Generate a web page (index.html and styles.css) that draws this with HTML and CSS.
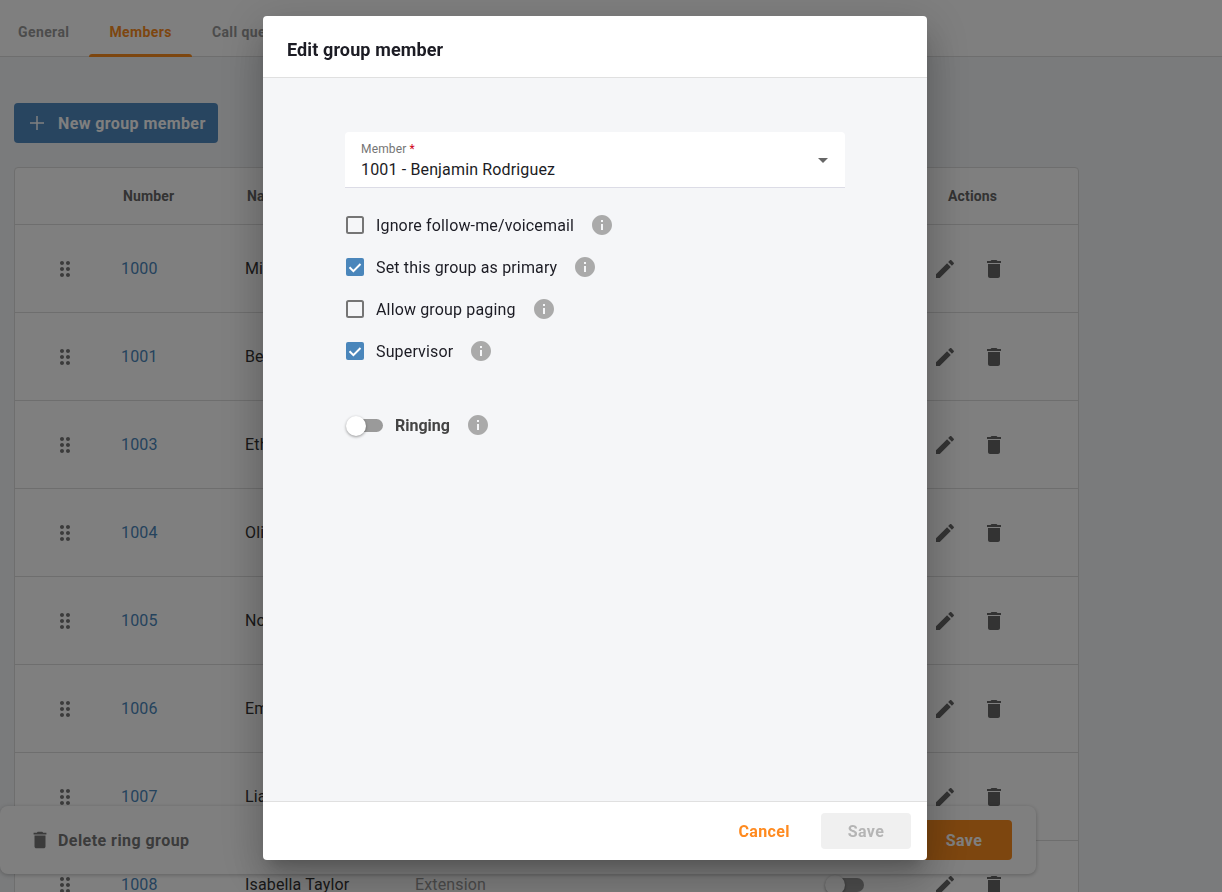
FILE: index.html
```html
<!DOCTYPE html>
<html lang="en">
<head>
  <meta charset="UTF-8">
  <meta name="viewport" content="width=device-width, initial-scale=1.0">
  <title>Edit group member</title>
  <link rel="stylesheet" href="styles.css">
</head>
<body>

  <svg class="defs" width="0" height="0" aria-hidden="true">
    <symbol id="i-drag" viewBox="0 0 24 24"><path d="M11 18c0 1.1-.9 2-2 2s-2-.9-2-2 .9-2 2-2 2 .9 2 2zm-2-8c-1.1 0-2 .9-2 2s.9 2 2 2 2-.9 2-2-.9-2-2-2zm0-6c-1.1 0-2 .9-2 2s.9 2 2 2 2-.9 2-2-.9-2-2-2zm6 4c1.1 0 2-.9 2-2s-.9-2-2-2-2 .9-2 2 .9 2 2 2zm0 2c-1.1 0-2 .9-2 2s.9 2 2 2 2-.9 2-2-.9-2-2-2zm0 6c-1.1 0-2 .9-2 2s.9 2 2 2 2-.9 2-2-.9-2-2-2z"/></symbol>
    <symbol id="i-edit" viewBox="0 0 24 24"><path d="M3 17.25V21h3.75L17.81 9.94l-3.75-3.75L3 17.25zM20.71 7.04c.39-.39.39-1.02 0-1.41l-2.34-2.34c-.39-.39-1.02-.39-1.41 0l-1.83 1.83 3.75 3.75 1.83-1.83z"/></symbol>
    <symbol id="i-trash" viewBox="0 0 24 24"><path d="M6 19c0 1.1.9 2 2 2h8c1.1 0 2-.9 2-2V7H6v12zM19 4h-3.5l-1-1h-5l-1 1H5v2h14V4z"/></symbol>
    <symbol id="i-info" viewBox="0 0 24 24"><path d="M12 2C6.48 2 2 6.48 2 12s4.48 10 10 10 10-4.48 10-10S17.52 2 12 2zm1 15h-2v-6h2v6zm0-8h-2V7h2v2z"/></symbol>
    <symbol id="i-off" viewBox="0 0 24 24"><rect x="4" y="4" width="16" height="16" rx="1.5" fill="none" stroke="#757575" stroke-width="2"/></symbol>
    <symbol id="i-on" viewBox="0 0 24 24"><rect x="3" y="3" width="18" height="18" rx="2" fill="#4a86bb"/><path d="M6.5 12.2l3.9 3.9L17.5 9" fill="none" stroke="#fff" stroke-width="2"/></symbol>
  </svg>

  <div class="page">
    <nav class="tabs">
      <a class="tab first">General</a>
      <a class="tab active">Members</a>
      <a class="tab">Call queue</a>
    </nav>

    <div class="content">
      <button class="btn-new">
        <svg class="icon" viewBox="0 0 24 24"><path d="M19 12.75h-6.25V19h-1.5v-6.25H5v-1.5h6.25V5h1.5v6.25H19v1.5z"/></svg>
        New group member
      </button>

      <div class="table">
        <div class="row head">
          <span></span>
          <span class="h-number">Number</span>
          <span class="h-name">Name</span>
          <span>Type</span>
          <span>Ringing</span>
          <span class="h-actions">Actions</span>
        </div>
        <div class="row">
          <svg class="icon drag"><use href="#i-drag"/></svg>
          <a class="num">1000</a><span>Mia Johnson</span><span class="type">Extension</span>
          <span class="switch"></span>
          <span class="actions"><svg class="icon"><use href="#i-edit"/></svg><svg class="icon"><use href="#i-trash"/></svg></span>
        </div>
        <div class="row">
          <svg class="icon drag"><use href="#i-drag"/></svg>
          <a class="num">1001</a><span>Benjamin Rodriguez</span><span class="type">Extension</span>
          <span class="switch"></span>
          <span class="actions"><svg class="icon"><use href="#i-edit"/></svg><svg class="icon"><use href="#i-trash"/></svg></span>
        </div>
        <div class="row">
          <svg class="icon drag"><use href="#i-drag"/></svg>
          <a class="num">1003</a><span>Ethan Clark</span><span class="type">Extension</span>
          <span class="switch"></span>
          <span class="actions"><svg class="icon"><use href="#i-edit"/></svg><svg class="icon"><use href="#i-trash"/></svg></span>
        </div>
        <div class="row">
          <svg class="icon drag"><use href="#i-drag"/></svg>
          <a class="num">1004</a><span>Olivia Smith</span><span class="type">Extension</span>
          <span class="switch"></span>
          <span class="actions"><svg class="icon"><use href="#i-edit"/></svg><svg class="icon"><use href="#i-trash"/></svg></span>
        </div>
        <div class="row">
          <svg class="icon drag"><use href="#i-drag"/></svg>
          <a class="num">1005</a><span>Noah Williams</span><span class="type">Extension</span>
          <span class="switch"></span>
          <span class="actions"><svg class="icon"><use href="#i-edit"/></svg><svg class="icon"><use href="#i-trash"/></svg></span>
        </div>
        <div class="row">
          <svg class="icon drag"><use href="#i-drag"/></svg>
          <a class="num">1006</a><span>Emma Brown</span><span class="type">Extension</span>
          <span class="switch"></span>
          <span class="actions"><svg class="icon"><use href="#i-edit"/></svg><svg class="icon"><use href="#i-trash"/></svg></span>
        </div>
        <div class="row">
          <svg class="icon drag"><use href="#i-drag"/></svg>
          <a class="num">1007</a><span>Liam Davis</span><span class="type">Extension</span>
          <span class="switch"></span>
          <span class="actions"><svg class="icon"><use href="#i-edit"/></svg><svg class="icon"><use href="#i-trash"/></svg></span>
        </div>
        <div class="row">
          <svg class="icon drag"><use href="#i-drag"/></svg>
          <a class="num">1008</a><span>Isabella Taylor</span><span class="type">Extension</span>
          <span class="switch"></span>
          <span class="actions"><svg class="icon"><use href="#i-edit"/></svg><svg class="icon"><use href="#i-trash"/></svg></span>
        </div>
      </div>
    </div>

    <div class="action-bar">
      <button class="btn-delete"><svg class="icon"><use href="#i-trash"/></svg>Delete ring group</button>
      <button class="btn-save">Save</button>
    </div>
  </div>

  <div class="overlay">
    <div class="modal">
      <header class="modal-head">Edit group member</header>

      <div class="modal-body">
        <div class="form">
          <div class="select">
            <label class="select-label">Member <em>*</em></label>
            <div class="select-value">1001 - Benjamin Rodriguez</div>
            <span class="caret"></span>
          </div>

          <div class="checks">
            <div class="check">
              <svg class="icon"><use href="#i-off"/></svg>
              <span>Ignore follow-me/voicemail</span>
              <svg class="icon info"><use href="#i-info"/></svg>
            </div>
            <div class="check">
              <svg class="icon"><use href="#i-on"/></svg>
              <span>Set this group as primary</span>
              <svg class="icon info"><use href="#i-info"/></svg>
            </div>
            <div class="check">
              <svg class="icon"><use href="#i-off"/></svg>
              <span>Allow group paging</span>
              <svg class="icon info"><use href="#i-info"/></svg>
            </div>
            <div class="check">
              <svg class="icon"><use href="#i-on"/></svg>
              <span>Supervisor</span>
              <svg class="icon info"><use href="#i-info"/></svg>
            </div>
          </div>

          <div class="ringing">
            <span class="switch"></span>
            <span class="ringing-label">Ringing</span>
            <svg class="icon info"><use href="#i-info"/></svg>
          </div>
        </div>
      </div>

      <footer class="modal-foot">
        <button class="btn-cancel">Cancel</button>
        <button class="btn-disabled">Save</button>
      </footer>
    </div>
  </div>

</body>
</html>
```

FILE: styles.css
```css
* {
  box-sizing: border-box;
}

html, body {
  height: 100%;
  margin: 0;
  overflow: hidden;
}

body {
  font-family: Roboto, sans-serif;
  font-size: 16px;
  letter-spacing: 0.15px;
  color: #333;
  background-color: #f4f6f8;
}

button {
  font-family: inherit;
  border: none;
  cursor: pointer;
}

.defs {
  position: absolute;
}

.icon {
  display: block;
  flex: none;
  width: 24px;
  height: 24px;
  fill: currentColor;
}

/* page behind the dialog */
.page {
  position: relative;
  height: 100%;
  overflow: hidden;
}

.tabs {
  display: flex;
  height: 57px;
  background-color: #fff;
  border-bottom: 1px solid #ddd;
}

.tab {
  position: relative;
  padding: 0 20px;
  font-size: 14px;
  font-weight: 700;
  line-height: 64px;
  letter-spacing: 0.4px;
  color: #999;
}

.tab.first {
  padding-left: 18px;
}

.tab.active {
  color: #fa8c1e;
}

.tab.active::after {
  content: "";
  position: absolute;
  left: 0;
  right: 0;
  bottom: -1px;
  height: 3px;
  background-color: #fa8c1e;
  border-radius: 3px 3px 0 0;
}

.content {
  padding: 46px 0 0 14px;
}

.btn-new {
  display: flex;
  align-items: center;
  gap: 9px;
  height: 40px;
  padding: 0 12px 0 11px;
  font-size: 16px;
  font-weight: 700;
  letter-spacing: 0.4px;
  color: #fff;
  background-color: #508ac0;
  border-radius: 4px;
}

.table {
  width: 1065px;
  margin-top: 24px;
  background-color: #fff;
  border: 1px solid #ddd;
  border-radius: 4px 4px 0 0;
}

.row {
  display: grid;
  grid-template-columns: 107px 123px 170px 411px 107px 1fr;
  align-items: center;
  height: 88px;
  border-bottom: 1px solid #ddd;
}

.row.head {
  height: 57px;
  font-size: 14px;
  font-weight: 700;
  color: #666;
}

.h-number {
  padding-left: 1px;
}

.h-name {
  padding-left: 2px;
}

.h-actions {
  padding-left: 15px;
}

.drag {
  margin-left: 38px;
  color: #777;
}

.num {
  margin-left: -1px;
  color: #4a86bb;
}

.type {
  color: #999;
}

.actions {
  display: flex;
  gap: 25px;
  color: #666;
}

.switch {
  position: relative;
  display: block;
  width: 38px;
  height: 14px;
  background-color: #9a9a9a;
  border-radius: 7px;
}

.switch::before {
  content: "";
  position: absolute;
  left: -1px;
  top: -3px;
  width: 20px;
  height: 20px;
  background-color: #fff;
  border-radius: 50%;
  box-shadow: 0 1px 3px rgba(0, 0, 0, 0.4);
}

.action-bar {
  position: absolute;
  left: 0;
  top: 806px;
  display: flex;
  align-items: center;
  justify-content: space-between;
  width: 1036px;
  height: 68px;
  padding: 0 24px 0 29px;
  background-color: #fff;
  border-radius: 8px;
  box-shadow: 0 1px 4px rgba(0, 0, 0, 0.25);
}

.btn-delete {
  display: flex;
  align-items: center;
  gap: 7px;
  padding: 0;
  font-size: 16px;
  font-weight: 700;
  letter-spacing: 0.45px;
  color: #777;
  background: none;
}

.btn-delete .icon {
  width: 22px;
  height: 22px;
}

.btn-save {
  width: 96px;
  height: 40px;
  font-size: 16px;
  font-weight: 700;
  letter-spacing: 0.4px;
  color: #fff;
  background-color: #fa8c1e;
  border-radius: 4px;
}

/* dialog */
.overlay {
  position: fixed;
  inset: 0;
  display: flex;
  justify-content: center;
  align-items: flex-start;
  padding: 16px 32px 0 0;
  background-color: rgba(0, 0, 0, 0.5);
}

.modal {
  display: flex;
  flex-direction: column;
  width: 664px;
  height: 844px;
  overflow: hidden;
  background-color: #fff;
  border-radius: 4px;
  box-shadow: 0 11px 15px -7px rgba(0, 0, 0, 0.2), 0 24px 38px 3px rgba(0, 0, 0, 0.14), 0 9px 46px 8px rgba(0, 0, 0, 0.12);
}

.modal-head {
  flex: none;
  height: 62px;
  padding: 0 24px;
  font-size: 18px;
  font-weight: 700;
  line-height: 67px;
  letter-spacing: 0.12px;
  color: #1c1c24;
  border-bottom: 1px solid #e0e0e0;
}

.modal-body {
  flex: 1;
  padding-top: 54px;
  background-color: #f5f6f8;
}

.form {
  width: 500px;
  margin: 0 auto;
}

.select {
  position: relative;
  height: 56px;
  padding: 10px 16px 0;
  background-color: #fff;
  border-bottom: 1px solid #dcdce6;
  border-radius: 4px 4px 0 0;
}

.select-label {
  display: block;
  font-size: 12px;
  line-height: 14px;
  color: #757575;
}

.select-label em {
  font-style: normal;
  color: #d0021b;
}

.select-value {
  margin-top: 4px;
  line-height: 20px;
  color: #1c1c24;
}

.caret {
  position: absolute;
  right: 17px;
  top: 26px;
  border-left: 5px solid transparent;
  border-right: 5px solid transparent;
  border-top: 5px solid #666;
}

.checks {
  display: flex;
  flex-direction: column;
  gap: 18px;
  margin-top: 25px;
}

.check {
  display: flex;
  align-items: center;
  gap: 9px;
  height: 24px;
  margin-left: -2px;
  color: #1c1c24;
}

.info {
  margin-left: 7px;
  color: #aaa;
}

.ringing {
  display: flex;
  align-items: center;
  gap: 12px;
  height: 24px;
  margin-top: 50px;
  margin-left: 2px;
}

.ringing .switch {
  width: 36px;
  height: 13px;
}

.ringing-label {
  font-weight: 700;
  letter-spacing: 0;
  color: #444;
}

.ringing .info {
  margin-left: 4px;
}

.modal-foot {
  display: flex;
  flex: none;
  align-items: center;
  justify-content: flex-end;
  gap: 31px;
  height: 59px;
  padding-right: 16px;
  border-top: 1px solid #e0e0e0;
}

.btn-cancel {
  padding: 0;
  font-size: 16px;
  font-weight: 700;
  letter-spacing: 0.4px;
  color: #ff8a1f;
  background: none;
}

.btn-disabled {
  width: 90px;
  height: 36px;
  font-size: 16px;
  font-weight: 700;
  letter-spacing: 0.4px;
  color: #b5b5b5;
  background-color: #f0f0f0;
  border-radius: 4px;
}
```
